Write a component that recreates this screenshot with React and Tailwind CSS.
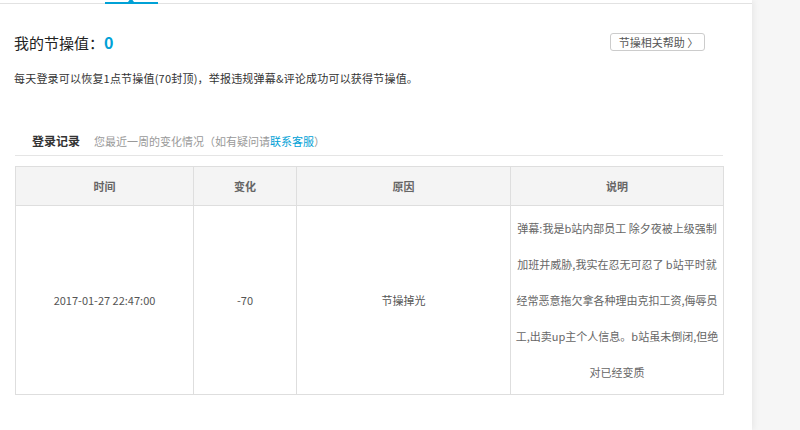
import React from "react";

const F = { fontFamily: '"Noto Sans CJK SC", "Liberation Sans", sans-serif' };

export default function App() {
  const lines = [
    "弹幕:我是b站内部员工 除夕夜被上级强制",
    "加班并威胁,我实在忍无可忍了 b站平时就",
    "经常恶意拖欠拿各种理由克扣工资,侮辱员",
    "工,出卖up主个人信息。b站虽未倒闭,但绝",
    "对已经变质",
  ];
  return (
    <div className="w-[800px] h-[430px] bg-[#f6f6f6] flex overflow-hidden" style={F}>
      <div className="w-[752px] h-full bg-white shadow-[2px_0_6px_rgba(0,0,0,0.06)] flex flex-col">
        <div className="h-[3px]" />
        <div className="relative h-px bg-[#e2e2e2]">
          <div className="absolute left-[105px] top-[-1px] w-[53px] h-[2px] bg-[#00a1d6]" />
          <div className="absolute left-[128px] top-[-5px] w-0 h-0 border-l-[3px] border-r-[3px] border-b-[4px] border-l-transparent border-r-transparent border-b-[#00a1d6]" />
        </div>
        <div className="flex items-center justify-between pl-[14px] pr-[47px] mt-[29px] h-[18px]">
          <div className="flex items-center text-[15px] text-[#222] leading-none">
            <span>我的节操值：</span>
            <span className="text-[#00a1d6] font-bold text-[16px]">0</span>
          </div>
          <div className="w-[95px] h-[18px] border border-[#ccc] rounded-[3px] flex items-center justify-center text-[11px] text-[#555] leading-none pl-[2px]">
            节操相关帮助&nbsp;〉
          </div>
        </div>
        <div className="pl-[14px] mt-[19px] text-[11px] text-[#333] leading-[16px] tracking-[0.2px]">
          每天登录可以恢复1点节操值(70封顶)，举报违规弹幕&amp;评论成功可以获得节操值。
        </div>
        <div className="ml-[15px] w-[708px] mt-[45px] border-b border-[#e5e5e5] pb-[4px] pl-[17px] flex items-center h-[25px]">
          <span className="text-[12px] font-bold text-[#333]">登录记录</span>
          <span className="ml-[14px] text-[11px] text-[#999]">
            您最近一周的变化情况（如有疑问请<span className="text-[#00a1d6]">联系客服</span>）
          </span>
        </div>
        <table className="ml-[15px] mt-[10px] w-[709px] border-collapse border border-[#dedede] text-[11px] text-[#555]">
          <thead>
            <tr className="h-[39px] bg-[#f4f4f4]">
              <th className="w-[178px] border border-[#dedede] font-bold text-[#666]">时间</th>
              <th className="w-[103px] border border-[#dedede] font-bold text-[#666]">变化</th>
              <th className="w-[214px] border border-[#dedede] font-bold text-[#666]">原因</th>
              <th className="border border-[#dedede] font-bold text-[#666]">说明</th>
            </tr>
          </thead>
          <tbody>
            <tr className="h-[189px]">
              <td className="border border-[#dedede] text-center">2017-01-27 22:47:00</td>
              <td className="border border-[#dedede] text-center">-70</td>
              <td className="border border-[#dedede] text-center">节操掉光</td>
              <td className="border border-[#dedede] text-center text-[#666] py-[3px] leading-[36px] whitespace-nowrap">
                {lines.map((l, i) => (
                  <div key={i}>{l}</div>
                ))}
              </td>
            </tr>
          </tbody>
        </table>
      </div>
    </div>
  );
}
